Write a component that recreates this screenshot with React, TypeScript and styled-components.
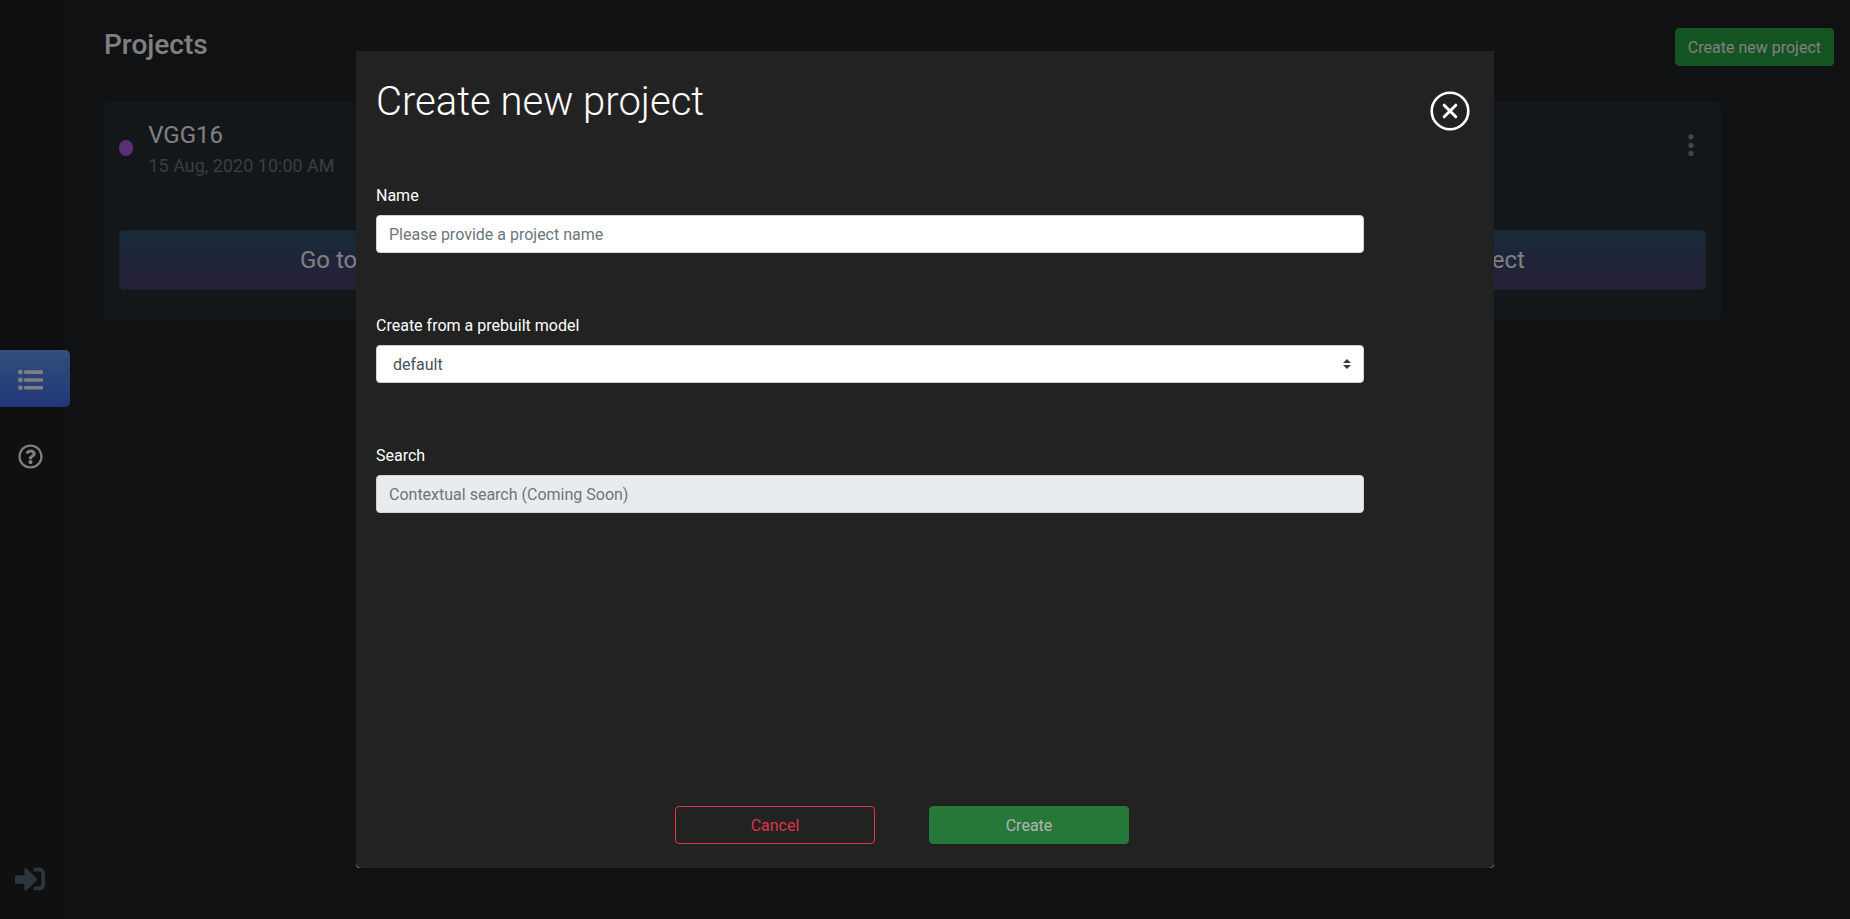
import React from 'react';
import styled, { createGlobalStyle } from 'styled-components';
import { FaRegQuestionCircle, FaSignInAlt } from 'react-icons/fa';

const GlobalStyle = createGlobalStyle`
  *, *::before, *::after { box-sizing: border-box; }
  body {
    margin: 0;
    background: #202327;
    color: #fff;
    font-family: Roboto, "Liberation Sans", sans-serif;
    font-size: 16px;
    line-height: 1.5;
    overflow: hidden;
  }
  h1, h2, h3, p { margin: 0; }
  button, input { font: inherit; }
`;

const Layout = styled.div`
  display: flex;
  height: 919px;
`;

const Sidebar = styled.nav`
  display: flex;
  flex-direction: column;
  width: 60px;
  flex: none;
  padding: 350px 0 25px;
  background: #202020;
`;

const NavItem = styled.a<{ $active?: boolean; $last?: boolean }>`
  display: flex;
  align-items: center;
  width: 70px;
  height: ${p => (p.$last ? '30px' : '57px')};
  flex: none;
  margin-top: ${p => (p.$last ? 'auto' : p.$active ? '0' : '20.5px')};
  padding: ${p => (p.$last ? '0 0 0 15px' : p.$active ? '2px 0 0 18px' : '0 0 0 18px')};
  border-radius: 0 5px 5px 0;
  font-size: ${p => (p.$last ? '30px' : '25px')};
  color: ${p => (p.$last ? '#5b6b7b' : '#fff')};
  background: ${p => (p.$active ? 'linear-gradient(#659ef5, #406ef0)' : 'none')};
`;

const Main = styled.main`
  flex: 1;
  min-width: 0;
  padding: 28px 16px 0 44px;
`;

const Header = styled.header`
  display: flex;
  justify-content: space-between;
  align-items: flex-start;
  height: 74px;
`;

const PageTitle = styled.h1`
  font-size: 28px;
  line-height: 34px;
  font-weight: 500;
`;

const Button = styled.button<{ $kind: 'success' | 'danger'; $wide?: boolean }>`
  height: 38px;
  width: ${p => (p.$wide ? '200px' : 'auto')};
  padding: 7px 12px 5px;
  line-height: 24px;
  border-radius: 4px;
  border: 1px solid ${p => (p.$kind === 'success' ? '#28a745' : '#dc3545')};
  background: ${p => (p.$kind === 'success' ? '#28a745' : 'transparent')};
  color: ${p => (p.$kind === 'success' ? '#fff' : '#dc3545')};
  &:disabled { opacity: 0.65; }
`;

const Cards = styled.section`
  display: flex;
  justify-content: space-between;
  width: 1617px;
`;

const Card = styled.article`
  display: flex;
  flex-direction: column;
  justify-content: space-between;
  width: 531px;
  height: 218px;
  padding: 15px 15.5px 30.5px 15.4px;
  border-radius: 5px;
  background: #282f33;
`;

const CardTop = styled.div`
  display: flex;
  align-items: flex-start;
`;

const Dot = styled.span`
  width: 14px;
  height: 16px;
  margin: 23px 15.2px 0 -0.4px;
  border-radius: 50%;
  background: #b75cf5;
`;

const CardTitle = styled.h2`
  font-size: 24px;
  line-height: 36px;
  font-weight: 400;
`;

const CardDate = styled.p`
  padding-left: 0.3px;
  font-size: 18px;
  line-height: 25px;
  color: #6c7c8d;
`;

const More = styled.svg`
  margin: 17px 11px 0 auto;
  fill: #8c8c8c;
`;

const OpenButton = styled.button`
  height: 59.5px;
  border: 1px solid #33435a;
  border-radius: 4px;
  background: linear-gradient(#305470, #4b4070);
  color: #fff;
  font-size: 24px;
`;

const Backdrop = styled.div`
  position: fixed;
  inset: 0;
  display: flex;
  justify-content: center;
  align-items: flex-start;
  padding-top: 51px;
  background: rgba(0, 0, 0, 0.5);
`;

const DialogFrame = styled.div`
  border-radius: 0 0 4px 4px;
  background: linear-gradient(#222 90%, #999 99%);
`;

const Dialog = styled.div`
  display: flex;
  flex-direction: column;
  width: 1138px;
  height: 817px;
  padding: 20px;
  border-radius: 0 0 5px 5px;
  background: #222;
`;

const DialogHeader = styled.div`
  display: flex;
  justify-content: space-between;
  height: 110px;
`;

const DialogTitle = styled.h2`
  font-size: 40px;
  line-height: 62px;
  font-weight: 300;
`;

const CloseIcon = styled.svg`
  margin: 20px 4px 0 0;
  fill: none;
  stroke: #fff;
  stroke-linecap: round;
`;

const Field = styled.label`
  display: flex;
  flex-direction: column;
  gap: 7px;
  width: 988px;
  height: 70px;
  margin: 3px 0 57px;
  line-height: 24px;
`;

const Input = styled.input`
  height: 38px;
  flex: none;
  padding: 6px 12px;
  border: 1px solid #ced4da;
  border-radius: 4px;
  background: #fff;
  color: #495057;
  &::placeholder { color: #6c757d; opacity: 1; }
  &:disabled { background: #e9ecef; }
`;

const Select = styled.div`
  display: flex;
  justify-content: space-between;
  align-items: flex-start;
  height: 38px;
  flex: none;
  padding: 7px 12px 0 16px;
  border: 1px solid #ced4da;
  border-radius: 4px;
  background: #fff;
  color: #495057;
`;

const SelectArrows = styled.svg`
  margin-top: 6px;
  fill: #343a40;
`;

const Actions = styled.div`
  display: flex;
  justify-content: center;
  gap: 54px;
  margin: auto 46px 4px 0;
`;

const ListIcon = () => (
  <svg width="25" height="22" viewBox="0 0 25 22" fill="currentColor">
    {[3.1, 11, 18.8].map(y => (
      <g key={y}>
        <circle cx="2.4" cy={y} r="2.4" />
        <rect x="6.1" y={y - 1.8} width="18.9" height="3.6" rx="0.8" />
      </g>
    ))}
  </svg>
);

export default function App() {
  return (
    <>
      <GlobalStyle />
      <Layout>
        <Sidebar>
          <NavItem $active><ListIcon /></NavItem>
          <NavItem><FaRegQuestionCircle /></NavItem>
          <NavItem $last><FaSignInAlt /></NavItem>
        </Sidebar>
        <Main>
          <Header>
            <PageTitle>Projects</PageTitle>
            <Button $kind="success">Create new project</Button>
          </Header>
          <Cards>
            <Card>
              <CardTop>
                <Dot />
                <div>
                  <CardTitle>VGG16</CardTitle>
                  <CardDate>15 Aug, 2020 10:00 AM</CardDate>
                </div>
              </CardTop>
              <OpenButton>Go to Project</OpenButton>
            </Card>
            <Card>
              <CardTop>
                <More width="8" height="24" viewBox="0 0 8 24">
                  <circle cx="4" cy="2.8" r="2.6" />
                  <circle cx="4" cy="11.3" r="2.6" />
                  <circle cx="4" cy="19.4" r="2.6" />
                </More>
              </CardTop>
              <OpenButton>Go to Project</OpenButton>
            </Card>
          </Cards>
        </Main>
      </Layout>
      <Backdrop>
        <DialogFrame>
          <Dialog role="dialog">
            <DialogHeader>
              <DialogTitle>Create new project</DialogTitle>
              <CloseIcon width="40" height="40" viewBox="0 0 40 40">
                <circle cx="20" cy="20" r="18.3" strokeWidth="2.6" />
                <path d="M14.2 14.2l11.6 11.6M25.8 14.2l-11.6 11.6" strokeWidth="3" />
              </CloseIcon>
            </DialogHeader>
            <Field>
              Name
              <Input placeholder="Please provide a project name" />
            </Field>
            <Field>
              Create from a prebuilt model
              <Select>
                default
                <SelectArrows width="8" height="10" viewBox="0 0 4 5">
                  <path d="M2 0L0 2h4zm0 5L0 3h4z" />
                </SelectArrows>
              </Select>
            </Field>
            <Field>
              Search
              <Input disabled placeholder="Contextual search (Coming Soon)" />
            </Field>
            <Actions>
              <Button $kind="danger" $wide>Cancel</Button>
              <Button $kind="success" $wide disabled>Create</Button>
            </Actions>
          </Dialog>
        </DialogFrame>
      </Backdrop>
    </>
  );
}
